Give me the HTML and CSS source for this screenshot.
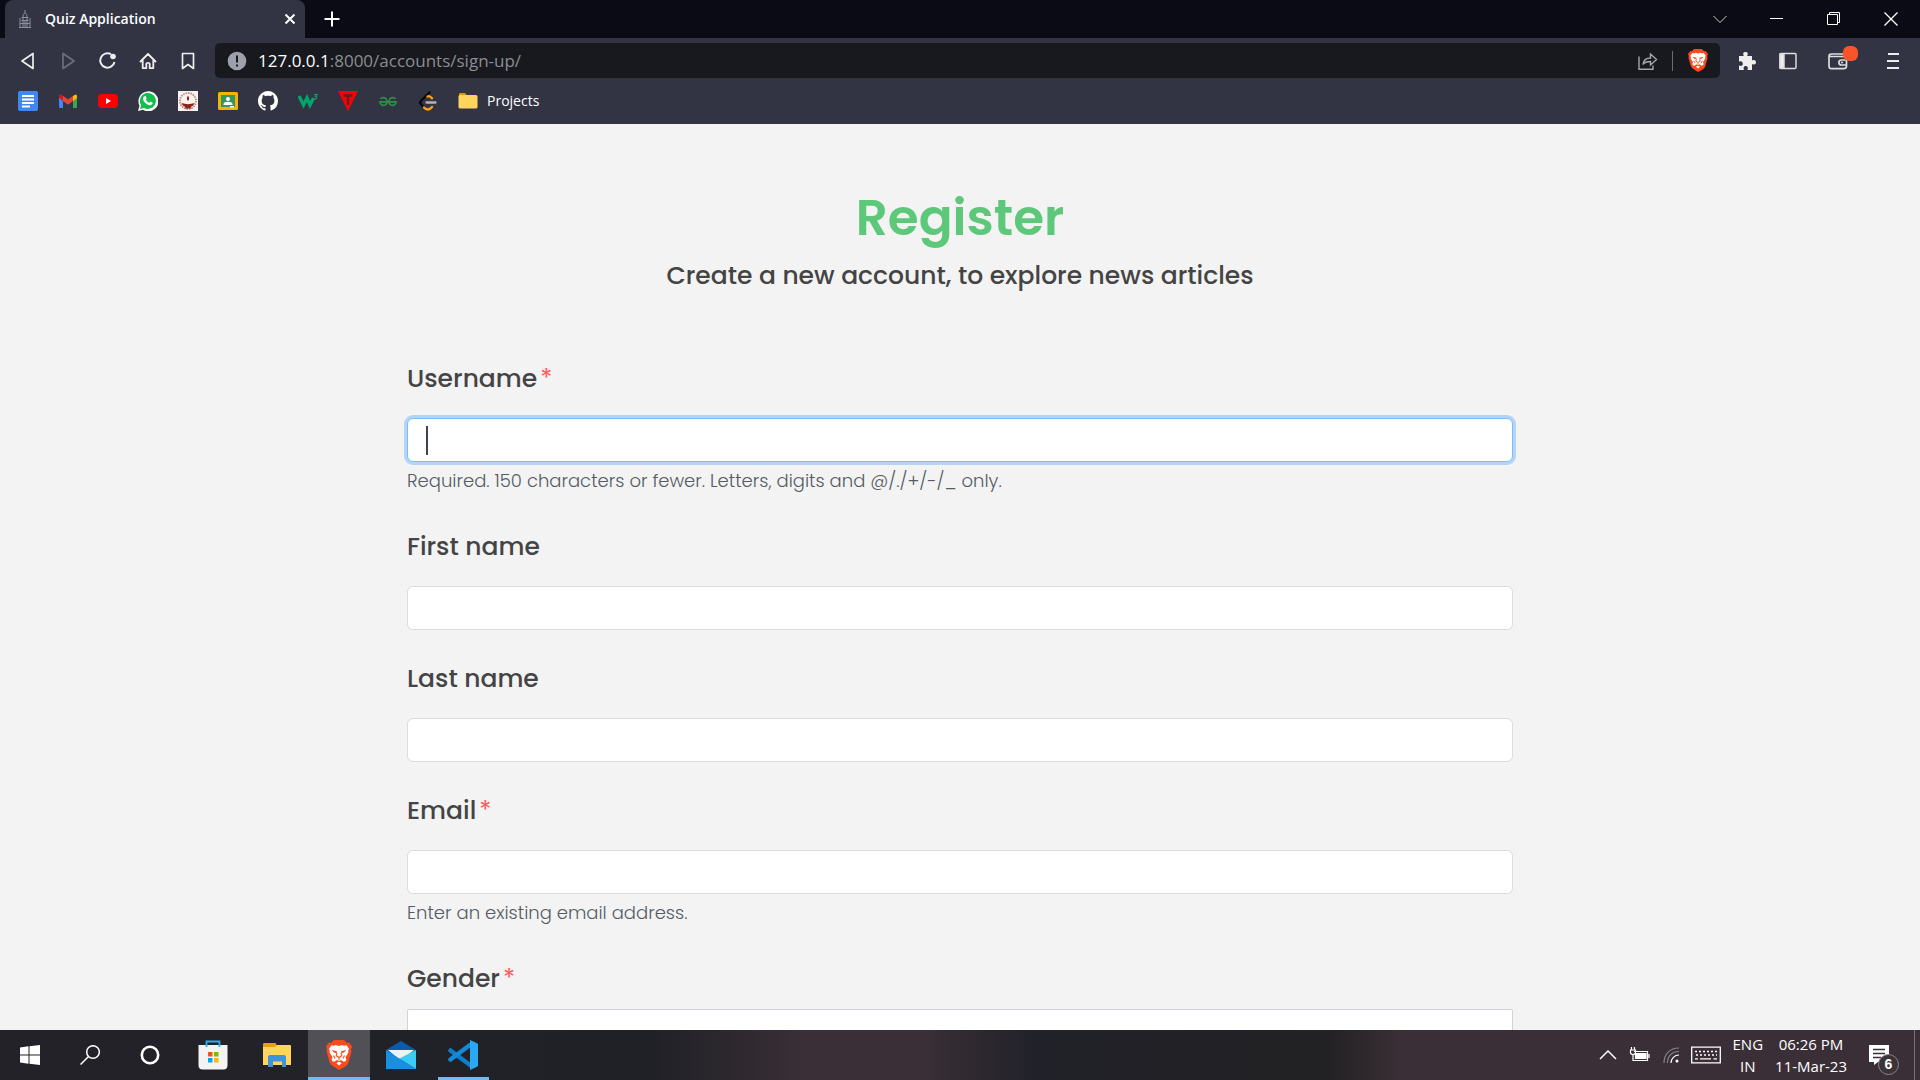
FILE: index.html
```html
<!DOCTYPE html>
<html lang="en">
<head>
<meta charset="utf-8">
<meta name="viewport" content="width=device-width, initial-scale=1">
<title>Quiz Application</title>
<link rel="stylesheet" href="styles.css">
</head>
<body>
<svg class="defs" aria-hidden="true">
  <symbol id="lion" viewBox="0 0 26 30">
    <path fill="#fb4a1e" d="M8 0h10l3 3 2-.5 3 4-1 3 .5 2-3 11c-.5 2-2 3-4 4.500L13 30l-5.500-3.500c-2-1.500-3.500-2.500-4-4.500L.5 11 1 9.500 0 6.500l3-4 2 .5z"/>
    <path fill="#fff" d="M13 6l3.500-1 1.500.8 2.500-.5 2.500 3.500-.8 2 .3 1.500-3 5 .8 2-.6 2-2 .4-2.700-1.700-2 .9-2-.9-2.700 1.700-2-.4-.6-2 .8-2-3-5 .3-1.500-.8-2 2.500-3.500 2.500.5 1.500-.8zM13 21.700l2.800 1.400-2.800 2.400-2.800-2.400z"/>
    <path fill="#fb4a1e" d="M6 10l5 1.300-.6 1.600c-1.800.1-3.400-.8-4.400-2.900zM20 10l-5 1.300.6 1.600c1.800.1 3.400-.8 4.400-2.900z"/>
    <path fill="none" stroke="#fb4a1e" stroke-width="1.100" d="M11 12.500l-.8 3.300L13 17.500l2.800-1.700-.8-3.300M13 17.500v2.500M7.500 15.500l1.500 3M18.500 15.500l-1.500 3"/>
  </symbol>
</svg>

<header class="browser">
  <div class="tabs">
    <div class="tab">
      <svg width="14" height="20" viewBox="0 0 14 20" fill="none" stroke="#8d909b"><path d="M7 1v3M5 8c0-5 4-5 4 0M3.500 8.500h7M3.500 11.500h7M2 18V9M12 18V9M5 9v9M9 9v9M7 12v6M1 18.500h12M2 14.500h10"/></svg>
      <span class="tab-title">Quiz Application</span>
      <button class="icon-btn" aria-label="Close tab"><svg width="12" height="12" viewBox="0 0 12 12" stroke="#fff" stroke-width="2"><path d="M1.500 1.500l9 9M10.500 1.500l-9 9"/></svg></button>
    </div>
    <button class="icon-btn new-tab" aria-label="New tab"><svg width="16" height="16" viewBox="0 0 16 16" stroke="#fff" stroke-width="2"><path d="M8 .5v15M.5 8h15"/></svg></button>
    <div class="window-controls">
      <button class="icon-btn" aria-label="Search tabs"><svg width="14" height="14" viewBox="0 0 14 14" fill="none" stroke="#ccc"><path d="M.5 4L7 10.500 13.500 4"/></svg></button>
      <button class="icon-btn" aria-label="Minimize"><svg width="14" height="14" viewBox="0 0 14 14" stroke="#fff"><path d="M0 6.500h13"/></svg></button>
      <button class="icon-btn" aria-label="Restore"><svg width="14" height="14" viewBox="0 0 14 14" fill="none" stroke="#fff"><path d="M.5 2.500h10v10H.5zM2.500 2.500v-2h10v10h-2"/></svg></button>
      <button class="icon-btn" aria-label="Close"><svg width="14" height="14" viewBox="0 0 14 14" stroke="#fff" stroke-width="1.300"><path d="M.5 .5l13 13M13.500 .5l-13 13"/></svg></button>
    </div>
  </div>

  <div class="toolbar">
    <div class="nav">
      <button class="icon-btn" aria-label="Back"><svg width="20" height="20" viewBox="0 0 20 20" fill="none" stroke="#eee" stroke-width="1.700" stroke-linejoin="round"><path d="M15 2.500v15L4 10z"/></svg></button>
      <button class="icon-btn" aria-label="Forward"><svg width="20" height="20" viewBox="0 0 20 20" fill="none" stroke="#6c6f7b" stroke-width="1.700" stroke-linejoin="round"><path d="M5 2.500v15L16 10z"/></svg></button>
      <button class="icon-btn" aria-label="Reload"><svg width="20" height="20" viewBox="0 0 20 20" fill="none" stroke="#eee" stroke-width="2"><path d="M13 3.200A7.200 7.200 0 1 0 16.500 11"/><circle cx="15" cy="5.500" r="2.800" fill="#eee" stroke="none"/></svg></button>
      <button class="icon-btn" aria-label="Home"><svg width="20" height="20" viewBox="0 0 20 20" fill="none" stroke="#eee" stroke-width="1.800" stroke-linejoin="round" stroke-linecap="round"><path d="M2.500 10.500L10 3l7.500 7.500M4.700 9v8.200h3.600v-4.500c0-1 3.400-1 3.400 0v4.500h3.600V9"/></svg></button>
      <button class="icon-btn" aria-label="Bookmark"><svg width="20" height="20" viewBox="0 0 20 20" fill="none" stroke="#eee" stroke-width="1.700" stroke-linejoin="round"><path d="M4.500 2.500h11v15L10 13.500l-5.500 4z"/></svg></button>
    </div>
    <div class="address">
      <svg width="20" height="20" viewBox="0 0 20 20"><circle cx="10" cy="10" r="9.300" fill="#9da0aa"/><path stroke="#17191f" stroke-width="2" d="M10 4.500v7M10 13.500v2"/></svg>
      <div class="url" role="textbox" aria-label="Address"><b>127.0.0.1</b>:8000/accounts/sign-up/</div>
      <button class="icon-btn" aria-label="Share"><svg width="20" height="20" viewBox="0 0 20 20" fill="none" stroke="#a5a6a9" stroke-width="1.400"><path d="M1 5.500v12.800h14V14.500M5 13.500c.5-4.500 3-6.500 7.500-6.500V3l6 5.500-6 5.500v-3.500c-4 0-6 .5-7.500 3z"/></svg></button>
      <span class="divider"></span>
      <button class="icon-btn" aria-label="Shields"><svg width="20" height="23"><use href="#lion"/></svg></button>
    </div>
    <div class="extensions">
      <button class="icon-btn" aria-label="Extensions"><svg width="20" height="20" viewBox="0 0 20 20" fill="#eee"><path d="M2 5h4.800C5.500 2.500 6.500 1 8.500 1s3 1.500 1.700 4H15v4.500c2.500-1.200 4 0 4 1.800s-1.500 3-4 1.700V19h-4.500c1-2.500 0-4-1.800-4s-2.800 1.500-1.700 4H2v-4.500c2.500 1 3.800 0 3.800-1.800S4.500 9.500 2 10.800z"/></svg></button>
      <button class="icon-btn" aria-label="Sidebar"><svg width="18" height="18" viewBox="0 0 18 18" fill="none" stroke="#ddd" stroke-width="1.500"><rect x="1" y="1.500" width="16" height="15" rx="1"/><path fill="#eee" d="M1 2h4v14H1z"/></svg></button>
      <button class="icon-btn wallet" aria-label="Wallet"><svg width="20" height="20" viewBox="0 0 20 20" fill="none" stroke="#ddd" stroke-width="1.700"><path d="M1 5.500v9.500c0 1.500 1 2.700 2.500 2.700h12c2 0 3-1 3-2.700V8c0-1.500-1-2.500-3-2.500zM1 5.500c0-2 1-2.500 2.500-2.500H16M19 9h-5.500c-3.500 0-3.500 5 0 5H19M13 11.500h2"/></svg><span class="dot"></span></button>
      <button class="icon-btn" aria-label="Menu"><svg width="12" height="18" viewBox="0 0 12 18" stroke="#eee" stroke-width="2"><path d="M1 2h11M0 9h12M0 16h12"/></svg></button>
    </div>
  </div>

  <nav class="bookmarks" aria-label="Bookmarks">
    <a href="#" aria-label="Docs"><svg width="20" height="20" viewBox="0 0 20 20"><rect width="20" height="20" rx="2" fill="#4285f4"/><path stroke="#fff" stroke-width="2" d="M4 5h12M4 8.500h12M4 12h12M4 15.500h8"/></svg></a>
    <a href="#" aria-label="Gmail"><svg width="20" height="20" viewBox="0 0 20 20"><path fill="#4285f4" d="M1 6l4 3v8H2.500C1.500 17 1 16.500 1 15.500z"/><path fill="#34a853" d="M19 6l-4 3v8h2.500c1 0 1.500-.5 1.500-1.500z"/><path fill="#fbbc04" d="M15 5l2-1.300c1-.6 2 .3 2 1.500V7l-4 3z"/><path fill="#c5221f" d="M5 5L3 3.700C2 3.100 1 4 1 5.200V7l4 3z"/><path fill="#ea4335" d="M5 4.800l5 3.800 5-3.800V10l-5 3.800L5 10z"/></svg></a>
    <a href="#" aria-label="YouTube"><svg width="20" height="20" viewBox="0 0 20 20"><rect y="3" width="20" height="14" rx="4" fill="#f00"/><path fill="#fff" d="M8 7l5 3-5 3z"/></svg></a>
    <a href="#" aria-label="WhatsApp"><svg width="20" height="20" viewBox="0 0 20 20"><path fill="#fff" d="M0 20l1.500-5.200A10 10 0 1 1 5 18.700z"/><path fill="#11bf4c" d="M2 18l1.200-3.700A8 8 0 1 1 6 16.900z"/><path fill="#fff" d="M6.500 5.200l1.200-.2 1 2.400-.9 1.100c.8 1.600 1.800 2.500 3.500 3.300l1.100-1.200 2.300 1.100c0 1.700-1.300 2.600-2.700 2.500C8.500 13.800 5.300 10.700 5 8c-.1-1.200.7-2.400 1.500-2.800z"/></svg></a>
    <a href="#" aria-label="Institute"><svg width="20" height="20" viewBox="0 0 20 20"><path fill="#f7f3f2" d="M0 0h20v20H0z"/><circle cx="10" cy="10" r="8" fill="none" stroke="#c4827c" stroke-width="1.800" stroke-dasharray="1.500 1"/><path fill="#8f2018" d="M10 4.500c1.700 2.800 1.200 4 0 5.500-1.200-1.500-1.700-2.700 0-5.500zM3.500 12c4 1.500 9 1.500 13 0-1 3-3 3.500-4 4l1 1.500h-7l1-1.500c-1-.5-3-1-4-4z"/></svg></a>
    <a href="#" aria-label="Classroom"><svg width="20" height="20" viewBox="0 0 20 20"><rect y="1" width="20" height="18" rx="1.500" fill="#f4b400"/><path fill="#36965f" d="M3 4h14v12H3z"/><circle cx="10" cy="8" r="2" fill="#fff"/><path fill="#fff" d="M5.500 14v-1c0-3 9-3 9 0v1zM12 15h4v1.500h-4z"/></svg></a>
    <a href="#" aria-label="GitHub"><svg width="20" height="20" viewBox="0 0 16 16"><path fill="#fff" d="M8 0C3.580 0 0 3.580 0 8c0 3.540 2.290 6.530 5.470 7.590.4.070.55-.17.55-.38 0-.19-.01-.82-.01-1.490-2.010.37-2.530-.49-2.690-.94-.09-.23-.48-.94-.82-1.130-.28-.15-.68-.52-.01-.53.63-.01 1.080.58 1.230.82.72 1.210 1.870.87 2.330.66.070-.52.28-.87.51-1.070-1.780-.2-3.640-.89-3.640-3.950 0-.87.31-1.590.82-2.150-.08-.2-.36-1.020.08-2.120 0 0 .67-.21 2.200.82.64-.18 1.320-.27 2-.27s1.360.09 2 .27c1.530-1.040 2.200-.82 2.200-.82.44 1.100.16 1.920.08 2.120.51.56.82 1.270.82 2.150 0 3.070-1.870 3.750-3.650 3.950.29.25.54.73.54 1.480 0 1.070-.01 1.930-.01 2.200 0 .21.15.46.55.38A8.010 8.010 0 0 0 16 8c0-4.420-3.580-8-8-8z"/></svg></a>
    <a href="#" aria-label="W3Schools"><svg width="20" height="20" viewBox="0 0 20 20" fill="none" stroke="#04a56d"><path stroke-width="3.400" d="M1 5l4.500 9L9 7l3 7 3.500-7"/><path stroke-width="1.200" d="M16 3.500h3L17.500 5.500c2 0 2 3-1.500 2.500"/></svg></a>
    <a href="#" aria-label="Tutorials"><svg width="20" height="20" viewBox="0 0 20 20"><path fill="red" d="M0 0h20L10 20z"/><path stroke="#5c2027" stroke-width="2.500" d="M5.500 4.500h9M10 4v10"/></svg></a>
    <a href="#" aria-label="GeeksforGeeks"><svg width="20" height="20" viewBox="0 0 20 20" fill="none" stroke="#2f8d46" stroke-width="1.700"><path d="M2.500 7.800c2-2 5-1.500 6 .7.800 2 .5 4.500-1.500 5.500-2.500 1-5-.5-5-3.200h16c0 2.700-2.500 4.200-5 3.200-2-1-2.300-3.500-1.500-5.500 1-2.200 4-2.700 6-.7"/></svg></a>
    <a href="#" aria-label="LeetCode"><svg width="20" height="20" viewBox="0 0 20 20" fill="none" stroke-width="2.300" stroke-linecap="round"><path stroke="#080808" d="M11.500 1.500L3 9.800c-1 1-1 2.400 0 3.400L5.500 16"/><path stroke="#ffa116" d="M9.500 5.500c2-1 3.500.5 4.500 1.800M6 16.500c2.500 3 5.500 2.500 8-.5"/><path stroke="#b3b3b3" d="M8.500 11.500h9"/></svg></a>
    <a href="#" class="folder"><svg width="20" height="20" viewBox="0 0 20 20"><path fill="#d89c08" d="M1 3.500C1 2.700 1.500 2 2.500 2H7l2 2.500h8V9H1z"/><rect x=".5" y="4" width="19" height="13.500" rx="1.500" fill="#ffd45c"/></svg><span>Projects</span></a>
  </nav>
</header>

<main class="page">
  <div class="container">
    <h1>Register</h1>
    <p class="lead">Create a new account, to explore news articles</p>
    <form class="form">
      <div class="field">
        <label for="username">Username<span class="req">*</span></label>
        <div class="control focused"><span class="caret"></span><input id="username" type="text" aria-describedby="username-help"></div>
        <small id="username-help">Required. 150 characters or fewer. Letters, digits and @/./+/-/_ only.</small>
      </div>
      <div class="field">
        <label for="first">First name</label>
        <div class="control"><input id="first" type="text"></div>
      </div>
      <div class="field">
        <label for="last">Last name</label>
        <div class="control"><input id="last" type="text"></div>
      </div>
      <div class="field">
        <label for="email">Email<span class="req">*</span></label>
        <div class="control"><input id="email" type="email" aria-describedby="email-help"></div>
        <small id="email-help">Enter an existing email address.</small>
      </div>
      <div class="field select-field">
        <label for="gender">Gender<span class="req">*</span></label>
        <select id="gender"><option></option></select>
      </div>
    </form>
  </div>
</main>

<footer class="taskbar">
  <div class="apps">
    <button class="app system" aria-label="Start"><svg width="20" height="20" viewBox="0 0 20 20" fill="#fff"><path d="M0 2.500l8.500-1.200v8.200H0zM9.500 1.200L20 0v9.500H9.500zM0 10.500h8.500v8.200L0 17.500zM9.500 10.500H20V20L9.500 18.800z"/></svg></button>
    <button class="app system" aria-label="Search"><svg width="20" height="20" viewBox="0 0 20 20" fill="none" stroke="#fff" stroke-width="1.500"><circle cx="13" cy="7" r="6.300"/><path d="M8.500 11.500L.5 19.500"/></svg></button>
    <button class="app system" aria-label="Cortana"><svg width="20" height="20" viewBox="0 0 20 20" fill="none" stroke="#fff" stroke-width="2.600"><circle cx="10" cy="10" r="8.200"/></svg></button>
    <button class="app store" aria-label="Store"><svg width="30" height="30" viewBox="0 0 30 30"><path fill="#f3f3f3" d="M.5 5h29v20c0 3-1.500 4.500-4 4.500h-21c-2.500 0-4-1.500-4-4.500z"/><path fill="none" stroke="#27b1ee" stroke-width="1.800" d="M8.500 7V1.500h13V7"/><path fill="#f25022" d="M10 12h4.500v4.500H10z"/><path fill="#7fba00" d="M16 12h4.500v4.500H16z"/><path fill="#00a4ef" d="M10 18h4.500v4.500H10z"/><path fill="#ffb900" d="M16 18h4.500v4.500H16z"/></svg></button>
    <button class="app" aria-label="File Explorer"><svg width="28" height="24" viewBox="0 0 28 24"><path fill="#e5a00d" d="M0 1.500C0 .5.500 0 1.500 0h11L14 2.500V6H0z"/><path fill="#ffd560" d="M0 4h12l2-2h13c.5 0 1 .5 1 1v19H0z"/><path fill="#3d94dc" d="M5 24V14c0-1 .5-2 2-2h14c1.500 0 2 1 2 2v10h-4v-5.500h-9V24z"/></svg></button>
    <button class="app active" aria-label="Brave"><svg width="26" height="30"><use href="#lion"/></svg></button>
    <button class="app" aria-label="Mail"><svg width="30" height="30" viewBox="0 0 30 30"><path fill="#0a5bad" d="M0 10L15 1l15 9v6H0z"/><path fill="#f1f1f1" d="M2 10h26L15 21z"/><path fill="#1a8fe0" d="M0 10l30 19H0z"/><path fill="#3bcbf5" d="M30 10v19L13.500 18.500z"/><path fill="#1a8fe0" d="M13.500 18.500L30 29H0z"/></svg></button>
    <button class="app open" aria-label="Visual Studio Code"><svg width="30" height="30" viewBox="0 0 30 30"><path fill="none" stroke="#0d7ec9" stroke-width="4.500" stroke-linecap="round" stroke-linejoin="round" d="M2.500 10.500L22 25"/><path fill="none" stroke="#1589d6" stroke-width="4.500" stroke-linecap="round" d="M2.500 19.500L22 5"/><path fill="#29a9f3" d="M22 0l6.500 3c1 .5 1.500 1 1.500 2v20c0 1-.5 1.500-1.500 2L22 30z"/></svg></button>
  </div>
  <div class="tray">
    <svg width="18" height="18" viewBox="0 0 18 18" fill="none" stroke="#fff" stroke-width="1.500"><path d="M1 13l8-8 8 8"/></svg>
    <svg width="22" height="18" viewBox="0 0 22 18" fill="none" stroke="#fff" stroke-width="1.200"><path d="M5 5.500h13.500v9H4V10M20 8v4M2.500 1v3M5.500 1v3M1.500 4h5v2.500c0 1.500-1 2-2.500 2s-2.500-.5-2.500-2zM4 8.500V12"/><path fill="#fff" d="M6.500 7.500H17v5H6.500z"/></svg>
    <svg width="16" height="16" viewBox="0 0 16 16" fill="none" stroke="#88838a" stroke-width="1.200"><path d="M1 16C1 7 7 1 16 1M4.500 16C4.500 9 9 4.500 16 4.500"/><path stroke="#fff" d="M8 16c0-4.500 3.500-8 8-8"/><circle cx="14" cy="14" r="1.500" fill="#fff" stroke="none"/></svg>
    <svg width="30" height="18" viewBox="0 0 30 18" fill="none" stroke="#fff" stroke-width="1.300"><path d="M.7 1.200h28.600v15.600H.7z"/><path stroke-dasharray="2 2" d="M4 5.500h22M5 9h21"/><path d="M4 12.800h3M9 12.800h11M22.500 12.800h3.500"/></svg>
    <div class="lang"><span>ENG</span><span>IN</span></div>
    <div class="clock"><span>06:26 PM</span><span>11-Mar-23</span></div>
    <button class="icon-btn notify" aria-label="Notifications"><svg width="20" height="20" viewBox="0 0 20 20"><path fill="#fff" d="M0 0h20v17H9l-4 3v-3H0z"/><path stroke="#3a2f36" stroke-width="1.300" d="M4 4.500h12M4 8.500h12M4 12.500h8"/></svg><span class="count">6</span></button>
    <span class="peek"></span>
  </div>
</footer>
</body>
</html>
```
FILE: styles.css
```css
* { box-sizing: border-box; }

body {
  margin: 0;
  height: 100vh;
  display: flex;
  flex-direction: column;
  overflow: hidden;
  background: #f3f3f3;
  font-family: "Open Sans", sans-serif;
}

svg { display: block; flex: none; }
.defs { position: absolute; width: 0; height: 0; }

.icon-btn {
  display: flex;
  align-items: center;
  justify-content: center;
  flex: none;
  padding: 0;
  border: 0;
  background: none;
}

/* Browser chrome */
.browser {
  flex: none;
  background: #323443;
  color: #fff;
}

.tabs {
  display: flex;
  height: 38px;
  padding: 0 1px 0 5px;
  background: #0b0b15;
}

.tab {
  display: flex;
  align-items: center;
  width: 300px;
  padding: 0 9px 0 13px;
  gap: 13px;
  border-radius: 8px 8px 0 0;
  background: #323443;
}

.tab-title {
  flex: 1;
  padding-bottom: 2px;
  font-size: 14px;
  font-weight: 600;
}

.new-tab { width: 54px; }

.window-controls {
  display: flex;
  margin-left: auto;
}

.window-controls .icon-btn { width: 57px; }

.toolbar {
  display: flex;
  align-items: center;
  height: 45px;
  padding: 0 21px 0 8px;
}

.nav { display: flex; }
.nav .icon-btn { width: 40px; height: 36px; }

.address {
  flex: 1;
  display: flex;
  align-items: center;
  height: 35px;
  margin-left: 7px;
  padding: 0 12px 0 12px;
  border-radius: 5px;
  background: #17191f;
}

.url {
  flex: 1;
  margin-left: 11px;
  font-size: 17px;
  color: #8c8d90;
}

.url b { font-weight: 400; color: #fff; }

.divider {
  width: 1px;
  height: 20px;
  margin: 0 15px 0 14px;
  background: #6b6c70;
}

.extensions {
  display: flex;
  align-items: center;
  margin-left: 17px;
  gap: 22px;
}

.wallet { position: relative; margin: 0 17px 0 9px; }

.dot {
  position: absolute;
  top: -5px;
  right: -10px;
  width: 15px;
  height: 15px;
  border-radius: 6px;
  background: #fb542b;
}

.bookmarks {
  display: flex;
  align-items: center;
  height: 41px;
  padding: 0 18px 5px;
  gap: 20px;
}

.bookmarks a { color: #fff; text-decoration: none; }

.folder {
  display: flex;
  align-items: center;
  gap: 9px;
  font-size: 14px;
}

.folder span { padding-bottom: 2px; }

/* Registration page */
.page {
  flex: 1;
  min-height: 0;
  overflow: hidden;
  color: #444;
  font-family: Poppins, Inter, sans-serif;
}

.container {
  max-width: 1138px;
  margin: 0 auto;
  padding: 64px 16px 0;
}

h1 {
  margin: 0;
  text-align: center;
  font-size: 50px;
  line-height: 60px;
  font-weight: 600;
  color: #5dc77a;
}

.lead {
  margin: 8px 0 63px;
  text-align: center;
  font-size: 25px;
  line-height: 40px;
  font-weight: 500;
}

.field {
  display: flex;
  flex-direction: column;
  margin-bottom: 29px;
}

.field label {
  margin-bottom: 19px;
  font-size: 25px;
  line-height: 40px;
  font-weight: 500;
}

.req { margin-left: 3px; color: #ff5b5b; font-weight: 400; }

.control {
  display: flex;
  align-items: center;
  height: 44px;
  border: 1px solid #dcdcde;
  border-radius: 6px;
  background: #fff;
}

.control.focused {
  border-color: #80bdff;
  box-shadow: 0 0 0 3px #b5d5f8;
}

.control input {
  flex: 1;
  min-width: 0;
  height: 100%;
  padding: 0 18px;
  border: 0;
  border-radius: 6px;
  outline: 0;
  background: transparent;
  font: inherit;
  font-size: 20px;
  color: #495057;
}

.caret {
  width: 2px;
  height: 29px;
  margin-left: 18px;
  background: #3e4552;
}

.field small {
  margin-top: 2px;
  font-size: 18px;
  line-height: 34px;
  font-weight: 300;
  color: #535c64;
}

.select-field label { margin-bottom: 10px; }

.select-field select {
  height: 44px;
  border: 1px solid #ced4da;
  border-radius: 2px;
  background: #fff;
  appearance: none;
}

/* Desktop taskbar */
.taskbar {
  flex: none;
  display: flex;
  justify-content: space-between;
  height: 50px;
  background: linear-gradient(90deg, #232229, #202127 34%, #3a2f36 42%, #3a2f36 48%, #212129 54%, #222123 69%, #3a2f36 73%, #3a2f36);
  color: #fff;
}

.apps { display: flex; }

.app {
  display: flex;
  align-items: center;
  justify-content: center;
  width: 62px;
  padding: 0;
  border: 0;
  background: none;
}

.app.system { width: 60px; }
.app.store { width: 66px; }
.app.active { background: #515056; box-shadow: inset 0 -3px #76b9ed; }
.app.open {
  background: linear-gradient(#76b9ed, #76b9ed) bottom / 51px 3px no-repeat;
}

.tray {
  display: flex;
  align-items: center;
  gap: 12px;
}

.lang, .clock {
  display: flex;
  flex-direction: column;
  align-items: center;
  font-size: 15px;
  line-height: 22px;
}

.notify { position: relative; margin: 0 13px 0 10px; }

.count {
  position: absolute;
  top: 9px;
  left: 9px;
  width: 21px;
  height: 21px;
  border: 1px solid #8a8488;
  border-radius: 50%;
  background: #3c3338;
  color: #fff;
  font-size: 14px;
  line-height: 19px;
  font-weight: 600;
}

.peek {
  width: 1px;
  height: 100%;
  margin-right: 5px;
  background: #77707a;
}
```
